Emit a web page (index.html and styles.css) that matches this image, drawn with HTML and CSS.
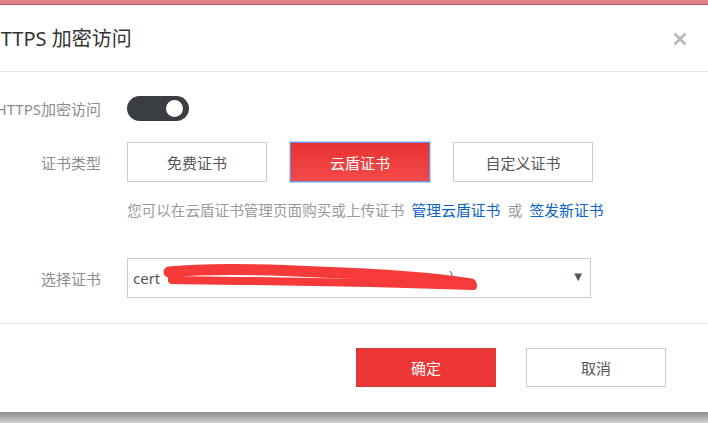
FILE: index.html
```html
<!DOCTYPE html>
<html>
<head>
  <title>HTTPS 加密访问</title>
  <link rel="stylesheet" href="styles.css">
</head>
<body>
  <div class="topbar"></div>
  <div class="dialog">
    <div class="dialog-header">
      <h2>HTTPS 加密访问</h2>
      <svg class="close" width="14" height="14" viewBox="0 0 14 14">
        <path d="M1.5 1.5 L12.5 12.5 M12.5 1.5 L1.5 12.5" stroke="#b9b9b9" stroke-width="2.6" fill="none"/>
      </svg>
    </div>

    <div class="dialog-body">
      <div class="row">
        <label class="label">HTTPS加密访问</label>
        <div class="toggle on"><span class="knob"></span></div>
      </div>

      <div class="row row-types">
        <label class="label">证书类型</label>
        <div class="btn-group">
          <button class="btn">免费证书</button>
          <button class="btn btn-active">云盾证书</button>
          <button class="btn">自定义证书</button>
        </div>
      </div>

      <p class="hint">您可以在云盾证书管理页面购买或上传证书 <a href="#">管理云盾证书</a> 或 <a href="#">签发新证书</a></p>

      <div class="row row-select">
        <label class="label">选择证书</label>
        <div class="select">
          <span class="select-text">cert</span>
          <span class="select-tail">)</span>
          <!-- hidden cert name -->
          <svg class="scribble" width="360" height="34" viewBox="0 0 360 34">
            <path d="M41 13 C80 9 130 10 190 13 C250 15 300 18 343 25" fill="none" stroke="#f63a3a" stroke-width="11" stroke-linecap="round"/>
            <path d="M44 21 C100 22 200 22 345 27" fill="none" stroke="#f63a3a" stroke-width="8" stroke-linecap="round"/>
            <path d="M40 9 L56 10 L52 24 L40 22 Z" fill="#f63a3a"/>
          </svg>
          <span class="caret">&#9660;</span>
        </div>
      </div>
    </div>

    <div class="dialog-footer">
      <button class="btn btn-primary">确定</button>
      <button class="btn">取消</button>
    </div>
  </div>
</body>
</html>
```

FILE: styles.css
```css
body {
  margin: 0;
  padding: 0;
  height: 423px;
  overflow: hidden;
  font-family: "Noto Sans", "Noto Sans CJK SC", sans-serif;
  background: linear-gradient(#8a8a8a, #d0d0d0 11px) no-repeat;
  background-position: 0 412px;
  background-color: #d0d0d0;
}
.topbar {
  height: 4px;
  background-color: #e2808a;
  border-bottom: 1px solid #b35765;
}
.dialog {
  margin-left: -34px;
  width: 742px;
  background-color: #ffffff;
}
.dialog-header {
  height: 66px;
  display: flex;
  align-items: center;
  justify-content: space-between;
  padding: 0 21px 0 20px;
  border-bottom: 1px solid #e5e5e5;
}
.dialog-header h2 {
  margin: 0;
  font-size: 20px;
  font-weight: normal;
  color: #333333;
  position: relative;
  top: -1px;
}
.close {
  position: relative;
  top: 1px;
}
.dialog-body {
  padding: 24px 20px 25px 20px;
  border-bottom: 1px solid #e5e5e5;
}
.row {
  display: flex;
  align-items: center;
}
.label {
  width: 115px;
  margin-right: 26px;
  text-align: right;
  font-size: 15px;
  color: #8c8c8c;
  white-space: nowrap;
  direction: rtl;
  overflow: hidden;
}
.toggle {
  width: 62px;
  height: 25px;
  border-radius: 13px;
  background-color: #3a3d42;
  position: relative;
}
.knob {
  position: absolute;
  right: 6px;
  top: 4px;
  width: 17px;
  height: 17px;
  border-radius: 50%;
  background-color: #ffffff;
}
.row-types {
  margin-top: 21px;
}
.btn-group {
  display: flex;
  gap: 23px;
}
.btn {
  width: 140px;
  height: 40px;
  border: 1px solid #cccccc;
  background-color: #ffffff;
  color: #555555;
  font-family: "Noto Sans CJK SC", sans-serif;
  font-size: 15px;
  padding: 0;
}
.btn-active {
  background: linear-gradient(#e83232, #f34a4a);
  border: 1px solid #6e90e6;
  box-shadow: 0 0 0 1px rgba(110, 144, 230, 0.4);
  color: #ffffff;
}
.hint {
  margin: 18px 0 0 141px;
  line-height: 20px;
  font-size: 14.6px;
  color: #9a9a9a;
  font-family: "Noto Sans CJK SC", sans-serif;
  word-spacing: 4px;
}
.hint a {
  color: #0a63c7;
  text-decoration: none;
  word-spacing: 0;
  font-size: 14.8px;
}
.row-select {
  margin-top: 38px;
}
.select {
  position: relative;
  width: 462px;
  height: 38px;
  border: 1px solid #cccccc;
  display: flex;
  align-items: center;
}
.select-text {
  margin-left: 5px;
  font-size: 15px;
  color: #555555;
}
.select-tail {
  position: absolute;
  left: 321px;
  top: 7px;
  font-size: 14px;
  color: #777777;
}
.scribble {
  position: absolute;
  left: 0;
  top: 0;
}
.caret {
  position: absolute;
  right: 8px;
  top: 12px;
  font-size: 10px;
  color: #555555;
  font-family: "DejaVu Sans", sans-serif;
}
.dialog-footer {
  display: flex;
  justify-content: flex-end;
  gap: 30px;
  padding: 24px 42px 25px 0;
}
.dialog-footer .btn {
  height: 39px;
}
.btn-primary {
  background-color: #ec3636;
  border: 1px solid #d63a3a;
  color: #ffffff;
}
```
